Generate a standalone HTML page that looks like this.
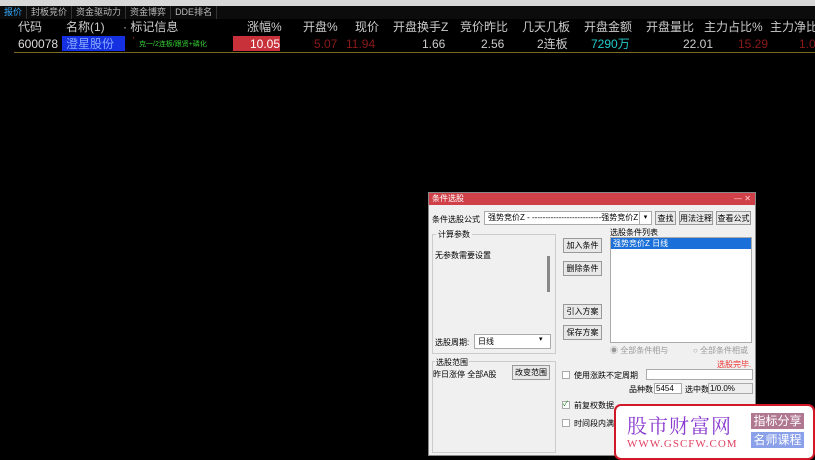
<!DOCTYPE html>
<html><head><meta charset="utf-8">
<style>
*{margin:0;padding:0;box-sizing:border-box}
body{width:815px;height:460px;background:#000;position:relative;overflow:hidden;font-family:"Liberation Sans","Noto Sans CJK SC",sans-serif;}
.a{position:absolute;white-space:nowrap}
.menu{left:0;top:0;width:815px;height:6px;background:#d8d8d8;}
.tabs{left:0;top:6px;width:815px;height:13px;background:#0c0c0c;font-size:9px;color:#bbb;line-height:13px}
.tabs span{display:inline-block;padding:0 4px;border-right:1px solid #333}
.h{top:19px;font-size:12px;color:#ccc;line-height:16px}
.r{top:36px;font-size:12px;line-height:16px}
.dlg{left:428px;top:192px;width:328px;height:264px;background:#f0f0f0;border:1px solid #888}
.tb{left:0;top:0;width:326px;height:12px;background:#d04048;color:#fff;font-size:8px;line-height:12px;padding-left:3px}
.s{font-size:8px;color:#000}
.btn{background:#e8e8e8;border:1px solid #999;font-size:8px;text-align:center;line-height:13px;color:#000}
.box{background:#fff;border:1px solid #aaa}
.grp{border:1px solid #ccc}
</style></head><body>
<div class="a menu"></div>
<div class="a" style="left:1050px"></div>
<div class="a tabs"><span style="color:#3af">报价</span><span>封板竞价</span><span>资金驱动力</span><span>资金博弈</span><span>DDE排名</span></div>
<div class="a" style="left:0;top:19px;width:815px;height:34px;background:#000"></div>
<div class="a h" style="left:18px">代码</div>
<div class="a h" style="left:66px">名称(1)</div>
<div class="a h" style="left:123px">·&nbsp;标记信息</div>
<div class="a h" style="left:247px">涨幅%</div>
<div class="a h" style="left:303px">开盘%</div>
<div class="a h" style="left:355px">现价</div>
<div class="a h" style="left:393px">开盘换手Z</div>
<div class="a h" style="left:460px">竞价昨比</div>
<div class="a h" style="left:522px">几天几板</div>
<div class="a h" style="left:584px">开盘金额</div>
<div class="a h" style="left:646px">开盘量比</div>
<div class="a h" style="left:704px">主力占比%</div>
<div class="a h" style="left:770px">主力净比%</div>
<div class="a r" style="left:18px;color:#ddd">600078</div>
<div class="a" style="left:62px;top:36px;width:63px;height:15px;background:#1530e0"></div>
<div class="a r" style="left:66px;color:#8af">澄星股份</div>
<div class="a" style="left:133px;top:36px;font-size:8px;color:#c33">'</div>
<div class="a" style="left:139px;top:39px;font-size:7px;color:#3c3">克一/2连板/跟贤+磷化</div>
<div class="a" style="left:233px;top:36px;width:47px;height:15px;background:#c8303a"></div>
<div class="a r" style="left:250px;color:#fff">10.05</div>
<div class="a r" style="left:314px;color:#8a1a1a">5.07</div>
<div class="a r" style="left:346px;color:#8a1a1a">11.94</div>
<div class="a r" style="left:422px;color:#ccc">1.66</div>
<div class="a r" style="left:481px;color:#ccc">2.56</div>
<div class="a r" style="left:537px;color:#ccc">2连板</div>
<div class="a r" style="left:591px;color:#2cc">7290万</div>
<div class="a r" style="left:683px;color:#ccc">22.01</div>
<div class="a r" style="left:738px;color:#8a1a1a">15.29</div>
<div class="a r" style="left:799px;color:#8a1a1a">1.0</div>
<div class="a" style="left:14px;top:52px;width:801px;height:1px;background:#7a6a20"></div>

<div class="a dlg">
<div class="a tb">条件选股<span style="position:absolute;right:4px;color:#fcc">— ✕</span></div>
<div class="a s" style="left:3px;top:21px">条件选股公式</div>
<div class="a box" style="left:55px;top:18px;width:168px;height:14px;font-size:8px;line-height:12px;padding-left:3px">强势竞价Z - --------------------------强势竞价Z</div>
<div class="a box" style="left:210px;top:18px;width:13px;height:14px;font-size:7px;text-align:center;line-height:12px">▾</div>
<div class="a btn" style="left:226px;top:18px;width:21px;height:14px">查找</div>
<div class="a btn" style="left:250px;top:18px;width:34px;height:14px">用法注释</div>
<div class="a btn" style="left:287px;top:18px;width:35px;height:14px">查看公式</div>
<div class="a grp" style="left:3px;top:41px;width:124px;height:120px"></div>
<div class="a s" style="left:7px;top:36px;background:#f0f0f0;padding:0 2px">计算参数</div>
<div class="a s" style="left:6px;top:57px">无参数需要设置</div>
<div class="a" style="left:118px;top:63px;width:3px;height:36px;background:#888"></div>
<div class="a s" style="left:6px;top:144px">选股周期:</div>
<div class="a box" style="left:45px;top:141px;width:77px;height:15px;font-size:8px;line-height:13px;padding-left:3px">日线</div>
<div class="a" style="left:110px;top:142px;font-size:7px">▾</div>
<div class="a btn" style="left:134px;top:45px;width:39px;height:15px">加入条件</div>
<div class="a btn" style="left:134px;top:68px;width:39px;height:15px">删除条件</div>
<div class="a btn" style="left:134px;top:111px;width:39px;height:15px">引入方案</div>
<div class="a btn" style="left:134px;top:132px;width:39px;height:15px">保存方案</div>
<div class="a s" style="left:181px;top:34px">选股条件列表</div>
<div class="a box" style="left:181px;top:44px;width:142px;height:106px"></div>
<div class="a" style="left:182px;top:45px;width:140px;height:11px;background:#1a70d8;color:#fff;font-size:8px;line-height:11px;padding-left:2px">强势竞价Z 日线</div>
<div class="a s" style="left:181px;top:152px;color:#999">◉ 全部条件相与</div>
<div class="a s" style="left:264px;top:152px;color:#999">○ 全部条件相或</div>
<div class="a s" style="left:288px;top:166px;color:#e33">选股完毕.</div>
<div class="a grp" style="left:3px;top:168px;width:124px;height:92px"></div>
<div class="a s" style="left:6px;top:164px;background:#f0f0f0;padding:0 1px">选股范围</div>
<div class="a s" style="left:4px;top:176px">昨日涨停 全部A股</div>
<div class="a btn" style="left:83px;top:172px;width:38px;height:15px">改变范围</div>
<div class="a box" style="left:133px;top:178px;width:8px;height:8px"></div>
<div class="a s" style="left:145px;top:177px">使用涨跌不定周期</div>
<div class="a box" style="left:217px;top:176px;width:107px;height:11px"></div>
<div class="a s" style="left:200px;top:191px">品种数</div>
<div class="a box" style="left:225px;top:190px;width:28px;height:11px;font-size:8px;line-height:9px;padding-left:1px">5454</div>
<div class="a s" style="left:256px;top:191px">选中数</div>
<div class="a box" style="left:279px;top:190px;width:45px;height:11px;font-size:8px;line-height:9px;padding-left:1px;background:#eee">1/0.0%</div>
<div class="a box" style="left:133px;top:208px;width:8px;height:8px;font-size:7px;line-height:6px;color:#070">✓</div>
<div class="a s" style="left:145px;top:207px">前复权数据</div>
<div class="a box" style="left:133px;top:226px;width:8px;height:8px"></div>
<div class="a s" style="left:145px;top:225px">时间段内满足</div>
</div>

<div class="a" style="left:614px;top:404px;width:201px;height:56px;background:#fff;border:2px solid #d01828;border-radius:7px"></div>
<div class="a" style="left:627px;top:410px;font-size:20px;color:#8a3ad0;font-family:'Noto Serif CJK SC',serif;letter-spacing:1px">股市财富网</div>
<div class="a" style="left:627px;top:438px;font-size:11px;color:#e04060;font-family:'Liberation Serif',serif;letter-spacing:1px">WWW.GSCFW.COM</div>
<div class="a" style="left:751px;top:413px;width:53px;height:16px;background:#b07890;color:#fff;font-size:12px;line-height:16px;text-align:center">指标分享</div>
<div class="a" style="left:751px;top:432px;width:53px;height:16px;background:#8aa0e8;color:#fff;font-size:12px;line-height:16px;text-align:center">名师课程</div>
</body></html>
